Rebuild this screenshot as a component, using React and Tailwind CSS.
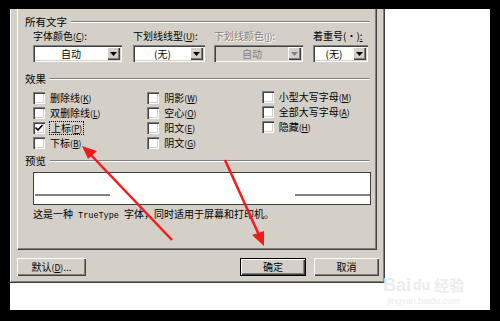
const font = { fontFamily: '"Noto Sans CJK SC", "Liberation Sans", sans-serif' };

const raised =
  "shadow-[inset_1px_1px_#ffffff,inset_-1px_-1px_#404040,inset_-2px_-2px_#808080]";
const sunken =
  "shadow-[inset_1px_1px_#808080,inset_2px_2px_#404040,inset_-1px_-1px_#ffffff,inset_-2px_-2px_#d4d0c8]";

function Key({ k }) {
  return (
    <span className="text-[8.5px]">
      (<span className="underline">{k}</span>)
    </span>
  );
}

function GroupHeader({ title }) {
  return (
    <div className="flex items-center h-[12px] pl-[7px] pr-[6px]">
      <span className="text-[10.5px] leading-[12px] pr-[4px]">{title}</span>
      <div className="flex-1 h-[2px] border-t border-[#808080] border-b border-b-white" />
    </div>
  );
}

function Combo({ value, width, disabled }) {
  return (
    <div
      className={`h-[17px] ${width} flex items-stretch p-[2px] ${sunken} ${
        disabled ? "bg-[#d4d0c8]" : "bg-white"
      }`}
    >
      <div
        className={`flex-1 flex items-center justify-center text-[10px] leading-[12px] ${
          disabled ? "text-[#808080]" : "text-black"
        }`}
      >
        {value}
      </div>
      <div className={`w-[13px] bg-[#d4d0c8] flex items-center justify-center ${raised}`}>
        <svg width="7" height="4" viewBox="0 0 7 4">
          <path d="M0 0H7L3.5 4Z" fill={disabled ? "#808080" : "#000"} />
        </svg>
      </div>
    </div>
  );
}

function Check({ label, k, checked, focus }) {
  return (
    <div className="flex items-center h-[15px]">
      <div className={`w-[12px] h-[12px] bg-white ${sunken} flex items-center justify-center`}>
        {checked && (
          <svg width="8" height="7" viewBox="0 0 8 7">
            <path d="M0.5 3.5L3 6L7.5 1" stroke="#000" strokeWidth="1.6" fill="none" />
          </svg>
        )}
      </div>
      <span
        className={`ml-[5px] text-[10px] leading-[12px] ${
          focus ? "outline outline-1 outline-dotted outline-black px-[1px]" : ""
        }`}
      >
        {label}
        <Key k={k} />
      </span>
    </div>
  );
}

function Button({ children, width, isDefault }) {
  return (
    <div
      className={`h-[18px] ${width} bg-[#d4d0c8] flex items-center justify-center text-[10px] leading-[12px] ${
        isDefault ? "border border-black" : ""
      } ${raised}`}
    >
      {children}
    </div>
  );
}

export default function App() {
  return (
    <div className="relative w-[500px] h-[321px] bg-black pt-[9px] pl-[10px] overflow-hidden" style={font}>
      <div className="relative w-[480px] h-[301px] bg-white">
        <div className="w-[375px] h-[274px] bg-[#d4d0c8] border-r border-b border-[#404040] shadow-[inset_1px_0_#ffffff,inset_-1px_-1px_#808080] text-black">
          <div className="ml-[7px] w-[360px] h-[241px] border-l border-white border-r border-b border-r-[#404040] border-b-[#404040] shadow-[inset_-1px_-1px_#808080] flex flex-col">
            <div className="mt-[7px]">
              <GroupHeader title="所有文字" />
            </div>
            <div className="flex ml-[15px] mt-[2px]">
              <div className="flex flex-col w-[89px]">
                <span className="text-[10px] leading-[12px] h-[12px]">
                  字体颜色<Key k="C" />:
                </span>
                <div className="mt-[3px]">
                  <Combo value="自动" width="w-[89px]" />
                </div>
              </div>
              <div className="flex flex-col w-[72px] ml-[11px]">
                <span className="text-[10px] leading-[12px] h-[12px] whitespace-nowrap">
                  下划线线型<Key k="U" />:
                </span>
                <div className="mt-[3px]">
                  <Combo value="(无)" width="w-[72px]" />
                </div>
              </div>
              <div className="flex flex-col w-[89px] ml-[9px]">
                <span className="text-[10px] leading-[12px] h-[12px] whitespace-nowrap text-[#808080] [text-shadow:1px_1px_#ffffff]">
                  下划线颜色<Key k="I" />:
                </span>
                <div className="mt-[3px]">
                  <Combo value="自动" width="w-[89px]" disabled />
                </div>
              </div>
              <div className="flex flex-col w-[55px] ml-[10px]">
                <span className="text-[10px] leading-[12px] h-[12px] whitespace-nowrap">
                  着重号(·)<span className="underline">:</span>
                </span>
                <div className="mt-[3px]">
                  <Combo value="(无)" width="w-[55px]" />
                </div>
              </div>
            </div>

            <div className="mt-[11px]">
              <GroupHeader title="效果" />
            </div>
            <div className="flex ml-[15px] mt-[5px]">
              <div className="flex flex-col w-[115px]">
                <Check label="删除线" k="K" />
                <Check label="双删除线" k="L" />
                <Check label="上标" k="P" checked focus />
                <Check label="下标" k="B" />
              </div>
              <div className="flex flex-col w-[115px]">
                <Check label="阴影" k="W" />
                <Check label="空心" k="O" />
                <Check label="阳文" k="E" />
                <Check label="阴文" k="G" />
              </div>
              <div className="flex flex-col w-[115px] -mt-[1px]">
                <Check label="小型大写字母" k="M" />
                <Check label="全部大写字母" k="A" />
                <Check label="隐藏" k="H" />
              </div>
            </div>

            <div className="mt-[5px]">
              <GroupHeader title="预览" />
            </div>
            <div className="ml-[15px] mt-[5px] w-[338px] h-[33px] bg-white border border-[#404040] flex items-end pb-[8px] justify-between">
              <div className="ml-[1px] w-[75px] h-[2px] bg-[#808080]" />
              <div className="w-[75px] h-[2px] bg-[#808080]" />
            </div>
            <div className="ml-[15px] mt-[3px] text-[10px] leading-[12px] whitespace-nowrap">
              这是一种
              <span className="text-[8.5px]" style={{ fontFamily: '"Liberation Mono", monospace' }}>
                {" TrueType "}
              </span>
              字体，同时适用于屏幕和打印机。
            </div>
          </div>

          <div className="flex mt-[8px] ml-[7px]">
            <Button width="w-[69px]">
              默认<Key k="D" />...
            </Button>
            <div className="ml-[154px]">
              <Button width="w-[66px]" isDefault>
                确定
              </Button>
            </div>
            <div className="ml-[8px]">
              <Button width="w-[65px]">取消</Button>
            </div>
          </div>
        </div>

        <div className="absolute left-[373px] top-[266px] flex flex-col items-center text-[#ececec] select-none">
          <div className="flex items-center gap-[2px] h-[20px] leading-[20px]">
            <span className="text-[18px] font-bold" style={{ fontFamily: '"Liberation Sans", sans-serif' }}>
              Bai
            </span>
            <span className="text-[14px] font-bold" style={{ fontFamily: '"Liberation Sans", sans-serif' }}>
              du
            </span>
            <span className="text-[15px] font-bold ml-[2px] leading-[20px]">经验</span>
          </div>
          <span className="mt-[1px] text-[9px] leading-[10px]" style={{ fontFamily: '"Liberation Sans", sans-serif' }}>
            jingyan.baidu.com
          </span>
        </div>
      </div>

      <svg className="absolute left-0 top-0" width="500" height="321" viewBox="0 0 500 321">
        <line x1="172" y1="240" x2="90" y2="154" stroke="#f21b1b" strokeWidth="2.5" />
        <path d="M82 146L97 151L88 159Z" fill="#f21b1b" />
        <line x1="225" y1="160" x2="259" y2="235" stroke="#f21b1b" strokeWidth="2.5" />
        <path d="M264 246L252 235L264 231Z" fill="#f21b1b" />
      </svg>
    </div>
  );
}
